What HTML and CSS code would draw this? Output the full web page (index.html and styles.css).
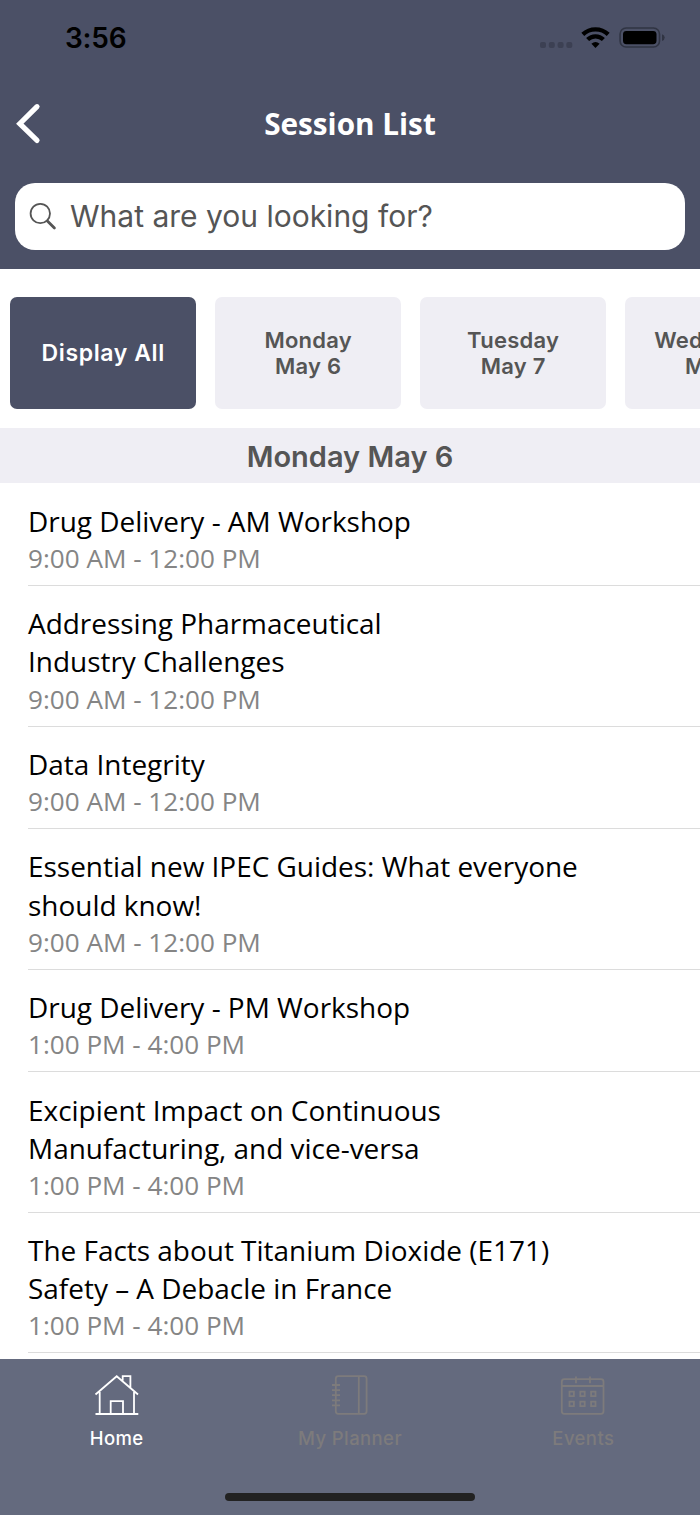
FILE: index.html
```html
<!DOCTYPE html>
<html lang="en">

<head>
  <meta charset="utf-8">
  <title>Session List</title>
  <link rel="stylesheet" href="styles.css">
</head>

<body>
  <div class="header">
    <div class="status-bar">
      <span class="clock">3:56</span>
      <svg class="status-icons" width="125" height="24" viewBox="0 0 125 24">
        <g fill="#3c4053">
          <rect x="0" y="15" width="6" height="6" rx="2" />
          <rect x="8.8" y="15" width="6" height="6" rx="2" />
          <rect x="17.6" y="15" width="6" height="6" rx="2" />
          <rect x="26.3" y="15" width="6" height="6" rx="2" />
        </g>
        <g fill="none" stroke="#000" stroke-width="4.2">
          <path d="M42.8 7.4A18.5 18.5 0 0 1 68.2 7.4" />
          <path d="M47.6 12.6A11.2 11.2 0 0 1 63.4 12.6" />
        </g>
        <path d="M51.4 16.8Q55.5 13.2 59.6 16.8L55.5 21z" />
        <rect x="80.1" y="1" width="39.4" height="19" rx="6" fill="none" stroke="#303443" stroke-width="1.6" />
        <rect x="83" y="4" width="33.5" height="13.2" rx="3.4" />
        <path d="M122 7.2Q124.7 8.2 124.7 10.6T122 14z" fill="#303443" />
      </svg>
    </div>
    <div class="title-bar">
      <svg class="back" width="26" height="42" viewBox="0 0 26 42">
        <path d="M22 3.7L4.8 20.7L22 37.4" fill="none" stroke="#fff" stroke-width="5.2" stroke-linecap="round" />
      </svg>
      <h1>Session List</h1>
    </div>
    <div class="search">
      <svg width="28" height="28" viewBox="0 0 28 28" fill="none" stroke="#555" stroke-linecap="round">
        <circle cx="11.3" cy="11.5" r="9.7" stroke-width="1.8" />
        <path d="M18.4 18.9L25.4 25.9" stroke-width="2.8" />
      </svg>
      <span>What are you looking for?</span>
    </div>
  </div>

  <div class="days">
    <div class="day active">Display All</div>
    <div class="day">Monday<br>May 6</div>
    <div class="day">Tuesday<br>May 7</div>
    <div class="day">Wednesday<br>May 8</div>
  </div>

  <h2>Monday May 6</h2>

  <div class="sessions">
    <div class="session">
      <div class="name">Drug Delivery - AM Workshop</div>
      <div class="hours">9:00 AM - 12:00 PM</div>
    </div>
    <div class="session">
      <div class="name">Addressing Pharmaceutical<br>Industry Challenges</div>
      <div class="hours">9:00 AM - 12:00 PM</div>
    </div>
    <div class="session">
      <div class="name">Data Integrity</div>
      <div class="hours">9:00 AM - 12:00 PM</div>
    </div>
    <div class="session">
      <div class="name">Essential new IPEC Guides: What everyone<br>should know!</div>
      <div class="hours">9:00 AM - 12:00 PM</div>
    </div>
    <div class="session">
      <div class="name">Drug Delivery - PM Workshop</div>
      <div class="hours">1:00 PM - 4:00 PM</div>
    </div>
    <div class="session">
      <div class="name">Excipient Impact on Continuous<br>Manufacturing, and vice-versa</div>
      <div class="hours">1:00 PM - 4:00 PM</div>
    </div>
    <div class="session">
      <div class="name">The Facts about Titanium Dioxide (E171)<br>Safety – A Debacle in France</div>
      <div class="hours">1:00 PM - 4:00 PM</div>
    </div>
  </div>

  <div class="tab-bar">
    <div class="tabs">
      <div class="tab selected">
        <svg width="46" height="42" viewBox="0 0 46 42" fill="none" stroke="currentColor" stroke-width="1.8">
          <path d="M1.5 20.5L22.7 2.2L44 20.5M5.7 18V40M40 18V40M1.5 40H44.3M16.7 40V27.2H29V40M28.7 6.5V2.2H36.4V13.6" />
        </svg>
        <span>Home</span>
      </div>
      <div class="tab">
        <svg width="46" height="42" viewBox="0 0 46 42" fill="none" stroke="currentColor" stroke-width="1.8">
          <rect x="8.8" y="2.2" width="30.8" height="37.6" rx="2.5" />
          <path d="M31.8 2.2V39.8M5 11H13M5 16.1H13M5 21.2H13M5 26.3H13M5 31.4H13" />
        </svg>
        <span>My Planner</span>
      </div>
      <div class="tab">
        <svg width="46" height="42" viewBox="0 0 46 42" fill="none" stroke="currentColor" stroke-width="1.8">
          <rect x="1.8" y="5.2" width="41.7" height="34.6" rx="2.5" />
          <path d="M1.8 12H43.5M16 2.5V9.2M30 2.5V9.2" />
          <path d="M9.5 17.7h4.4v4.4h-4.4zM20.3 17.7h4.4v4.4h-4.4zM31.1 17.7h4.4v4.4h-4.4zM9.5 27.7h4.4v4.4h-4.4zM20.3 27.7h4.4v4.4h-4.4zM31.1 27.7h4.4v4.4h-4.4z" />
        </svg>
        <span>Events</span>
      </div>
    </div>
    <div class="home-indicator"></div>
  </div>
</body>

</html>
```
FILE: styles.css
```css
* {
  box-sizing: border-box;
}

body {
  display: flex;
  flex-direction: column;
  width: 700px;
  height: 1515px;
  margin: 0;
  overflow: hidden;
  background-color: #fff;
  font-family: Inter, "Liberation Sans", sans-serif;
}

.header {
  height: 269px;
  flex-shrink: 0;
  padding: 0 15px;
  background-color: #4b5066;
}

.status-bar {
  display: flex;
  justify-content: space-between;
  height: 76px;
  padding: 27px 20px 0 50px;
}

.clock {
  font-size: 28px;
  font-weight: 600;
  line-height: 22px;
  letter-spacing: -0.2px;
}

.title-bar {
  display: grid;
  grid-template-columns: 26px 1fr 26px;
  align-items: center;
  height: 96px;
}

h1 {
  margin: 0;
  text-align: center;
  color: #fff;
  font-family: "Open Sans", sans-serif;
  font-size: 29.7px;
  font-weight: 700;
  line-height: 40px;
}

.search {
  display: flex;
  align-items: center;
  gap: 13px;
  height: 67px;
  margin-top: 11px;
  padding: 0 14px 2px;
  border-radius: 20px;
  background-color: #fff;
  color: #555;
  font-size: 30px;
}

.days {
  display: flex;
  flex-shrink: 0;
  gap: 18.6px;
  height: 159px;
  padding: 28px 10px 19px;
  overflow: hidden;
}

.day {
  display: flex;
  flex: 0 0 186.4px;
  align-items: center;
  justify-content: center;
  height: 112px;
  border-radius: 7px;
  background-color: #efeef4;
  color: #555;
  font-size: 22px;
  font-weight: 600;
  line-height: 26px;
  letter-spacing: 0.25px;
  text-align: center;
}

.active {
  background-color: #4b5066;
  color: #fff;
  font-size: 23px;
  letter-spacing: 0.6px;
}

h2 {
  flex-shrink: 0;
  height: 55px;
  margin: 0;
  background-color: #efeef4;
  color: #555;
  font-size: 29px;
  font-weight: 600;
  line-height: 57px;
  text-align: center;
}

.sessions {
  flex: 1;
  min-height: 0;
  padding: 0.6px 0 0 28px;
}

.session {
  padding: 18.3px 0 9.1px;
  border-bottom: 1px solid #dcdcdc;
}

.name {
  font-family: "Open Sans", sans-serif;
  font-size: 27.95px;
  line-height: 38.1px;
}

.hours {
  color: #858585;
  font-family: "Open Sans", sans-serif;
  font-size: 26.1px;
  line-height: 36px;
}

.tab-bar {
  display: flex;
  flex-direction: column;
  flex-shrink: 0;
  align-items: center;
  justify-content: space-between;
  height: 156px;
  padding: 15px 0 14px;
  background-color: #646a7e;
}

.tabs {
  display: flex;
  width: 100%;
}

.tab {
  display: flex;
  flex: 1;
  flex-direction: column;
  align-items: center;
  gap: 9px;
  color: #7d7b7c;
  font-size: 18.5px;
  font-weight: 500;
  line-height: 27px;
  letter-spacing: 0.4px;
}

.selected {
  color: #fff;
}

.home-indicator {
  width: 250px;
  height: 8px;
  border-radius: 4px;
  background-color: #222;
}
```
